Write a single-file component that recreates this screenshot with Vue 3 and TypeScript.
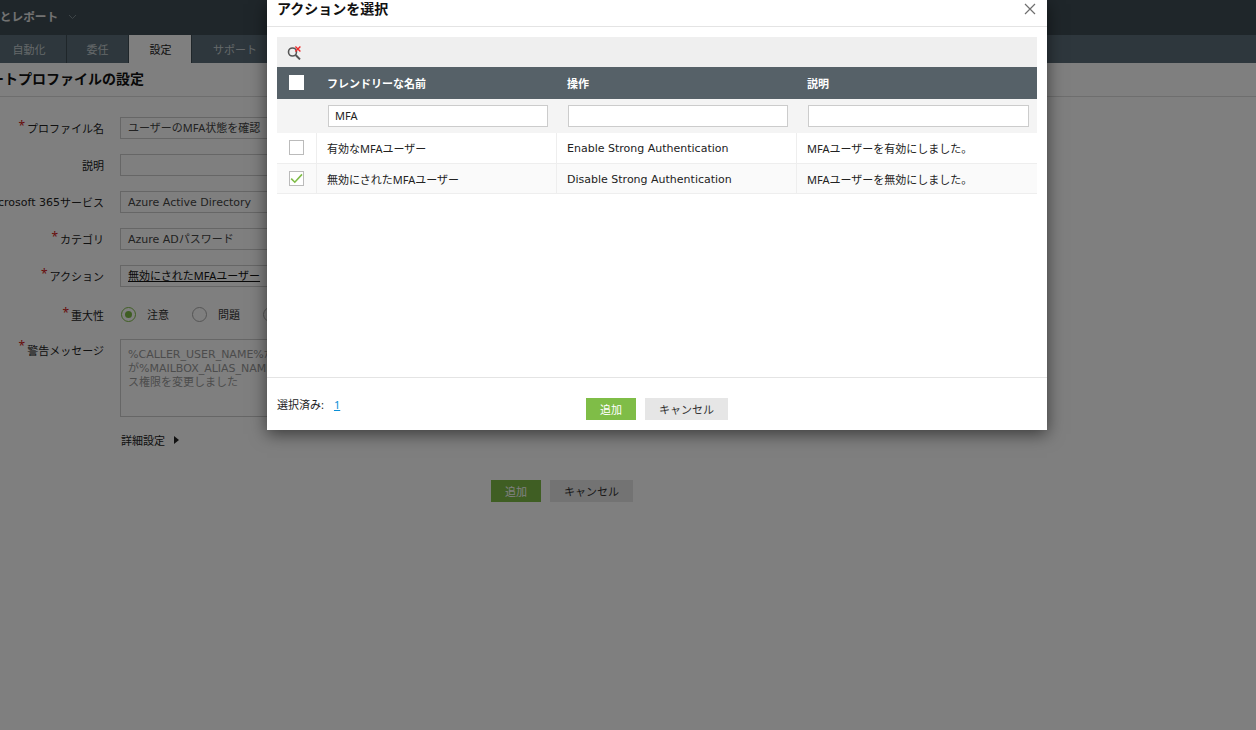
<script setup lang="ts">
interface Row { name: string; op: string; desc: string; checked: boolean }
const rows: Row[] = [
  { name: '有効なMFAユーザー', op: 'Enable Strong Authentication', desc: 'MFAユーザーを有効にしました。', checked: false },
  { name: '無効にされたMFAユーザー', op: 'Disable Strong Authentication', desc: 'MFAユーザーを無効にしました。', checked: true },
]
const tabs = ['自動化', '委任', '設定', 'サポート']
</script>

<template>
  <div class="page">
    <header class="topbar">
      <span class="brand">アラートとレポート</span>
      <svg class="chev" width="9" height="6" viewBox="0 0 9 6"><path d="M1 1l3.5 3.5L8 1" fill="none" stroke="#7d8a90" stroke-width="1" /></svg>
    </header>
    <nav class="tabs">
      <span v-for="t in tabs" :key="t" class="tab" :class="{ active: t === '設定' }">{{ t }}</span>
    </nav>
    <h1 class="title">アラートプロファイルの設定</h1>
    <form class="form" @submit.prevent>
      <div class="frow">
        <div class="label"><i>*</i>プロファイル名</div>
        <div class="field">ユーザーのMFA状態を確認</div>
      </div>
      <div class="frow">
        <div class="label">説明</div>
        <div class="field"></div>
      </div>
      <div class="frow">
        <div class="label"><span class="latin">Microsoft 365</span>サービス</div>
        <div class="field"><span class="latin">Azure Active Directory</span></div>
      </div>
      <div class="frow">
        <div class="label"><i>*</i>カテゴリ</div>
        <div class="field"><span class="latin">Azure AD</span>パスワード</div>
      </div>
      <div class="frow">
        <div class="label"><i>*</i>アクション</div>
        <div class="field"><u>無効にされたMFAユーザー</u></div>
      </div>
      <div class="frow radios">
        <div class="label"><i>*</i>重大性</div>
        <div class="radio-group">
          <span class="radio on"></span><span class="rtext">注意</span>
          <span class="radio"></span><span class="rtext">問題</span>
          <span class="radio"></span>
        </div>
      </div>
      <div class="frow msg">
        <div class="label"><i>*</i>警告メッセージ</div>
        <div class="field area"><span class="latin">%CALLER_USER_NAME%</span>が<br />が<span class="latin">%MAILBOX_ALIAS_NAME%</span>のアクセ<br />ス権限を変更しました</div>
      </div>
      <div class="advanced">詳細設定<span class="tri"></span></div>
      <div class="actions">
        <span class="btn add">追加</span>
        <span class="btn cancel">キャンセル</span>
      </div>
    </form>

    <div class="overlay"></div>

    <section class="modal">
      <div class="mhead">
        <h2>アクションを選択</h2>
        <svg class="close" width="12" height="12" viewBox="0 0 12 12"><path d="M1 1l10 10M11 1L1 11" stroke="#6f6f6f" stroke-width="1.2" fill="none" /></svg>
      </div>
      <div class="mbody">
        <div class="searchbar">
          <svg width="15" height="15" viewBox="0 0 15 15">
            <circle cx="5.5" cy="7" r="4" fill="none" stroke="#555" stroke-width="1.6" />
            <path d="M8.6 10l4.4 4.4" stroke="#555" stroke-width="2" />
            <path d="M8.4 1.4l5 5M13.4 1.4l-5 5" stroke="#ef2b2b" stroke-width="1.4" />
          </svg>
        </div>
        <div class="grid ghead">
          <div class="c0"><span class="box white"></span></div>
          <div class="cell">フレンドリーな名前</div>
          <div class="cell">操作</div>
          <div class="cell">説明</div>
        </div>
        <div class="grid gfilter">
          <div class="c0"></div>
          <div class="fcell"><div class="finput">MFA</div></div>
          <div class="fcell"><div class="finput"></div></div>
          <div class="fcell"><div class="finput last"></div></div>
        </div>
        <div v-for="r in rows" :key="r.name" class="grid grow" :class="{ alt: r.checked }">
          <div class="c0">
            <span class="box">
              <svg v-if="r.checked" width="13" height="11" viewBox="0 0 13 11"><path d="M1.2 5.6l3.6 3.6L12 1.4" fill="none" stroke="#7fbd47" stroke-width="1.6" /></svg>
            </span>
          </div>
          <div class="cell">{{ r.name }}</div>
          <div class="cell op"><span class="latin">{{ r.op }}</span></div>
          <div class="cell">{{ r.desc }}</div>
        </div>
      </div>
      <div class="mfoot">
        <div class="selected">選択済み:<a>1</a></div>
        <span class="btn add">追加</span>
        <span class="btn cancel">キャンセル</span>
      </div>
    </section>
  </div>
</template>

<style>
html, body { margin: 0; background: #fff; }
</style>

<style scoped>
.page {
  position: relative;
  width: 1256px;
  height: 730px;
  overflow: hidden;
  background: #fff;
  font-family: "Noto Sans", "Noto Sans CJK JP", sans-serif;
  font-size: 11px;
  color: #222;
}
.latin { font-family: "DejaVu Sans", "Noto Sans CJK JP", sans-serif; font-size: 11px; }
.topbar {
  height: 35px;
  background: #3e4c54;
  display: flex;
  align-items: center;
  gap: 10px;
  margin-left: -47px;
  padding-bottom: 4px;
  box-sizing: border-box;
  color: #fff;
}
.brand { font-size: 11.7px; font-weight: 700; color: #e4e4e4; }
.chev { margin-top: 2px; }
.tabs { height: 28px; background: #5c6f7a; display: flex; }
.tab {
  background: #5c6f7a;
  border-right: 1px solid #3e4c54;
  box-sizing: border-box;
  color: #c8cfd3;
  font-size: 11px;
  display: flex;
  align-items: center;
  justify-content: center;
}
.tab:first-child { width: 67px; padding-right: 8px; }
.tab:nth-child(2) { width: 62px; }
.tab:nth-child(3) { width: 63px; padding-left: 1px; }
.tab:nth-child(4) { width: 86px; border-right: 0; }
.tab.active { background: #fff; color: #222; }
.title {
  margin: 0 0 0 -38px;
  height: 34px;
  width: 1400px;
  font-size: 14px;
  font-weight: 700;
  line-height: 32px;
  color: #111;
  border-bottom: 1px solid #ddd;
  box-sizing: border-box;
}
.form { display: flex; flex-direction: column; padding-top: 20px; }
.frow { display: flex; gap: 16px; height: 22px; margin-bottom: 15px; }
.label {
  width: 104px;
  display: flex;
  justify-content: flex-end;
  align-items: center;
  white-space: nowrap;
  flex: none;
}
.label i { color: #d01616; font-style: normal; font-size: 12px; margin-right: 2px; margin-top: -5px; }
.field {
  width: 300px;
  height: 22px;
  border: 1px solid #ccc;
  box-sizing: border-box;
  padding: 0 7px;
  line-height: 19px;
  color: #444;
  white-space: nowrap;
}
.field u { color: #111; }
.radios { margin-bottom: 13px; height: 24px; }
.radios .label { padding-top: 2px; }
.radio-group { display: flex; align-items: center; margin-left: 1px; }
.radio {
  width: 15px;
  height: 15px;
  border: 1.5px solid #aaa;
  border-radius: 50%;
  box-sizing: border-box;
  position: relative;
  flex: none;
}
.radio.on { border-color: #7fbd47; }
.radio.on::after {
  content: "";
  position: absolute;
  inset: 3px;
  border-radius: 50%;
  background: #7fbd47;
}
.rtext { margin: 0 23px 0 11px; color: #333; }
.msg { height: 78px; margin-bottom: 12px; }
.msg .label { align-items: flex-start; padding-top: 3px; height: 22px; }
.area { height: 78px; padding: 7px; line-height: 13px; color: #999; overflow: hidden; }
.advanced { margin-left: 121px; height: 22px; display: flex; align-items: center; color: #222; }
.tri {
  margin-left: 9px;
  width: 0;
  height: 0;
  border-left: 5px solid #222;
  border-top: 4px solid transparent;
  border-bottom: 4px solid transparent;
}
.actions { display: flex; gap: 9px; margin: 29px 0 0 491px; }
.btn {
  height: 22px;
  display: flex;
  align-items: center;
  justify-content: center;
  font-size: 11px;
  padding-bottom: 1px;
  box-sizing: border-box;
  flex: none;
}
.btn.add { width: 50px; background: #7fbd47; color: #fff; }
.btn.cancel { width: 83px; background: #e6e6e6; color: #333; }
.overlay { position: absolute; inset: 0; background: rgba(0, 0, 0, 0.5); }
.modal {
  position: absolute;
  left: 267px;
  top: 0;
  width: 780px;
  height: 430px;
  background: #fff;
  box-shadow: 0 4px 16px rgba(0, 0, 0, 0.55);
  display: flex;
  flex-direction: column;
}
.mhead {
  height: 27px;
  border-bottom: 1px solid #e4e4e4;
  box-sizing: border-box;
  display: flex;
  justify-content: space-between;
  padding: 0 11px 0 10px;
  flex: none;
}
.mhead h2 { margin: 0; font-size: 14px; font-weight: 700; line-height: 17px; color: #111; }
.close { margin-top: 3px; }
.mbody { padding: 10px 10px 0; flex: 1; }
.searchbar {
  height: 30px;
  background: #efefef;
  display: flex;
  align-items: center;
  padding-left: 10px;
}
.grid { display: grid; grid-template-columns: 40px 240px 240px 240px; }
.c0 { display: flex; align-items: center; padding-left: 12px; box-sizing: border-box; }
.ghead { height: 32px; background: #566168; color: #fff; font-weight: 700; }
.ghead .c0 { padding-bottom: 1px; }
.ghead .cell { display: flex; align-items: center; padding-left: 10px; padding-bottom: 1px; }
.gfilter { height: 34px; background: #f4f4f4; }
.fcell { padding: 6px 9px 0 11px; box-sizing: border-box; }
.finput {
  height: 22px;
  background: #fff;
  border: 1px solid #ccc;
  box-sizing: border-box;
  padding: 0 6px;
  line-height: 20px;
  color: #222;
  width: 220px;
}
.finput.last { width: 221px; }
.grow { height: 31px; border-bottom: 1px solid #eee; box-sizing: border-box; color: #222; }
.grow.alt { height: 30px; background: #fafafa; }
.grow.alt .op { padding-top: 1px; }
.grow .c0 { border-right: 1px solid #eee; align-items: flex-start; padding-top: 7px; }
.grow .cell { display: flex; align-items: center; padding-left: 10px; border-right: 1px solid #eee; box-sizing: border-box; }
.grow .cell:last-child { border-right: 0; }
.box {
  width: 15px;
  height: 15px;
  border: 1px solid #bbb;
  background: #fff;
  box-sizing: border-box;
  display: flex;
  align-items: center;
  justify-content: center;
}
.box.white { border-color: #fff; }
.mfoot {
  height: 53px;
  border-top: 1px solid #e4e4e4;
  box-sizing: border-box;
  display: flex;
  padding: 20px 0 0 10px;
  flex: none;
}
.selected { width: 309px; color: #222; line-height: 14px; margin-right: 0; }
.selected a { color: #0a8fd6; text-decoration: underline; margin-left: 10px; }
.mfoot .cancel { margin-left: 9px; }
</style>
